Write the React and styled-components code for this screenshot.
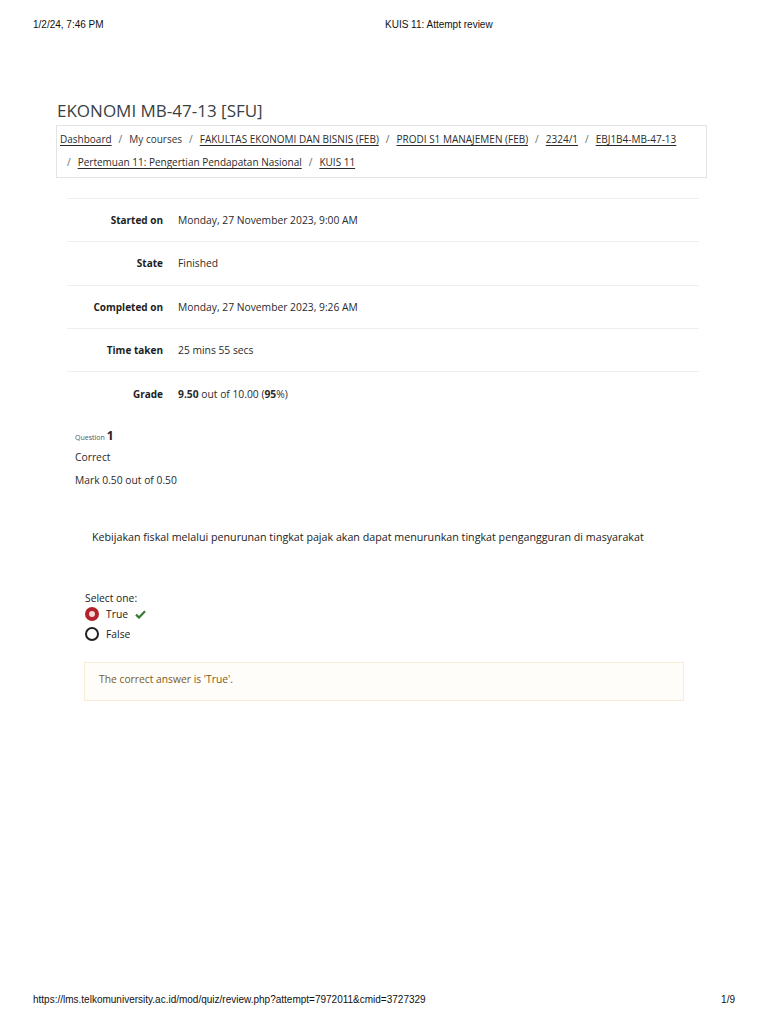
import React from "react";
import styled, { createGlobalStyle } from "styled-components";

const Global = createGlobalStyle`
  html, body { margin: 0; padding: 0; background: #fff; }
  * { box-sizing: border-box; }
`;

const UI = `"Open Sans", "Noto Sans", sans-serif`;
const PRINT = `"Liberation Sans", Arial, sans-serif`;

const Page = styled.div`
  width: 768px;
  height: 1024px;
  display: flex;
  flex-direction: column;
  font-family: ${UI};
  color: #1d2125;
`;

const PrintBar = styled.div`
  display: grid;
  grid-template-columns: 352px 1fr auto;
  padding: 0 33px;
  font-family: ${PRINT};
  font-size: 10px;
  line-height: 12px;
  color: #111;
  height: ${(p) => p.$h}px;
  align-items: ${(p) => p.$align};
`;

const Main = styled.main`
  flex: 1;
  padding: 0 61px 0 56px;
`;

const Title = styled.h1`
  margin: 47px 0 0 1px;
  font-size: 17px;
  line-height: 28px;
  font-weight: 400;
  color: #3a3f44;
`;

const Crumbs = styled.nav`
  border: 1px solid #e3e3e3;
  padding: 2px 3px 3px;
  display: flex;
  flex-wrap: wrap;
  font-size: 10px;
  line-height: 23px;
  color: #333;
`;

const Item = styled.span`
  white-space: nowrap;
`;

const Crumb = styled.a`
  color: #2b2b2b;
  text-decoration: underline;
  text-underline-offset: 2px;
`;

const Sep = styled.span`
  color: #666;
  margin: 0 7px;
`;

const Summary = styled.div`
  margin: 20px 8px 0 11px;
  border-top: 1px solid #efefef;
`;

const Row = styled.div`
  display: grid;
  grid-template-columns: 96px 1fr;
  column-gap: 15px;
  height: 43.3px;
  align-items: center;
  border-bottom: ${(p) => (p.$last ? "none" : "1px solid #efefef")};
  font-size: 10px;
`;

const Label = styled.div`
  text-align: right;
  font-weight: 700;
  color: #1d1d1d;
`;

const Value = styled.div`
  font-size: 10.3px;
  color: #2a2a2a;
  b { font-weight: 700; }
`;

const QInfo = styled.div`
  margin: 13px 0 0 19px;
  font-size: 10.3px;
  color: #2a2a2a;
`;

const QNo = styled.div`
  font-size: 7px;
  color: #4a5568;
  line-height: 16px;
  span {
    font-size: 12px;
    font-weight: 700;
    color: #1d2125;
    margin-left: 2px;
  }
`;

const InfoLine = styled.div`
  line-height: 23px;
`;

const QText = styled.div`
  margin: 38px 0 0 36px;
  font-size: 10.7px;
  color: #222;
`;

const Answer = styled.div`
  margin: 48px 0 0 29px;
  font-size: 10.3px;
  color: #222;
`;

const Prompt = styled.div`
  line-height: 12px;
`;

const Option = styled.div`
  display: flex;
  align-items: center;
  gap: 7px;
  height: 20px;
`;

const Radio = styled.span`
  width: 14px;
  height: 14px;
  border-radius: 50%;
  border: ${(p) => (p.$on ? "4.5px solid #b3232b" : "2px solid #222")};
  background: ${(p) => (p.$on ? "#f6dada" : "#fff")};
`;

const Feedback = styled.div`
  margin: 18px 23px 0 28px;
  border: 1px solid #f8ecd6;
  background: #fffdf9;
  padding: 9px 14px 13px;
  font-size: 10.3px;
  line-height: 15px;
  color: #7b5a1e;
`;

const Check = () => (
  <svg width="11" height="9" viewBox="0 0 11 9">
    <path d="M1 4.6 L4 7.5 L10 1.3" fill="none" stroke="#357a32" strokeWidth="2.2" />
  </svg>
);

const trail = [
  { text: "Dashboard", link: true },
  { text: "My courses", link: false },
  { text: "FAKULTAS EKONOMI DAN BISNIS (FEB)", link: true },
  { text: "PRODI S1 MANAJEMEN (FEB)", link: true },
  { text: "2324/1", link: true },
  { text: "EBJ1B4-MB-47-13", link: true },
  { text: "Pertemuan 11: Pengertian Pendapatan Nasional", link: true },
  { text: "KUIS 11", link: true },
];

const rows = [
  ["Started on", "Monday, 27 November 2023, 9:00 AM"],
  ["State", "Finished"],
  ["Completed on", "Monday, 27 November 2023, 9:26 AM"],
  ["Time taken", "25 mins 55 secs"],
];

export default function App() {
  return (
    <Page>
      <Global />
      <PrintBar $h={50} $align="center">
        <span>1/2/24, 7:46 PM</span>
        <span>KUIS 11: Attempt review</span>
        <span />
      </PrintBar>
      <Main>
        <Title>EKONOMI MB-47-13 [SFU]</Title>
        <Crumbs>
          {trail.map((c, i) => (
            <Item key={c.text}>
              {i > 0 && <Sep>/</Sep>}
              {c.link ? <Crumb>{c.text}</Crumb> : c.text}
            </Item>
          ))}
        </Crumbs>
        <Summary>
          {rows.map(([k, v]) => (
            <Row key={k}>
              <Label>{k}</Label>
              <Value>{v}</Value>
            </Row>
          ))}
          <Row $last>
            <Label>Grade</Label>
            <Value>
              <b>9.50</b> out of 10.00 (<b>95</b>%)
            </Value>
          </Row>
        </Summary>
        <QInfo>
          <QNo>
            Question<span>1</span>
          </QNo>
          <InfoLine>Correct</InfoLine>
          <InfoLine>Mark 0.50 out of 0.50</InfoLine>
        </QInfo>
        <QText>
          Kebijakan fiskal melalui penurunan tingkat pajak akan dapat menurunkan tingkat pengangguran di masyarakat
        </QText>
        <Answer>
          <Prompt>Select one:</Prompt>
          <Option>
            <Radio $on />
            True <Check />
          </Option>
          <Option>
            <Radio />
            False
          </Option>
        </Answer>
        <Feedback>The correct answer is 'True'.</Feedback>
      </Main>
      <PrintBar $h={30} $align="start">
        <span style={{ gridColumn: "1 / 3" }}>
          https://lms.telkomuniversity.ac.id/mod/quiz/review.php?attempt=7972011&amp;cmid=3727329
        </span>
        <span>1/9</span>
      </PrintBar>
    </Page>
  );
}
